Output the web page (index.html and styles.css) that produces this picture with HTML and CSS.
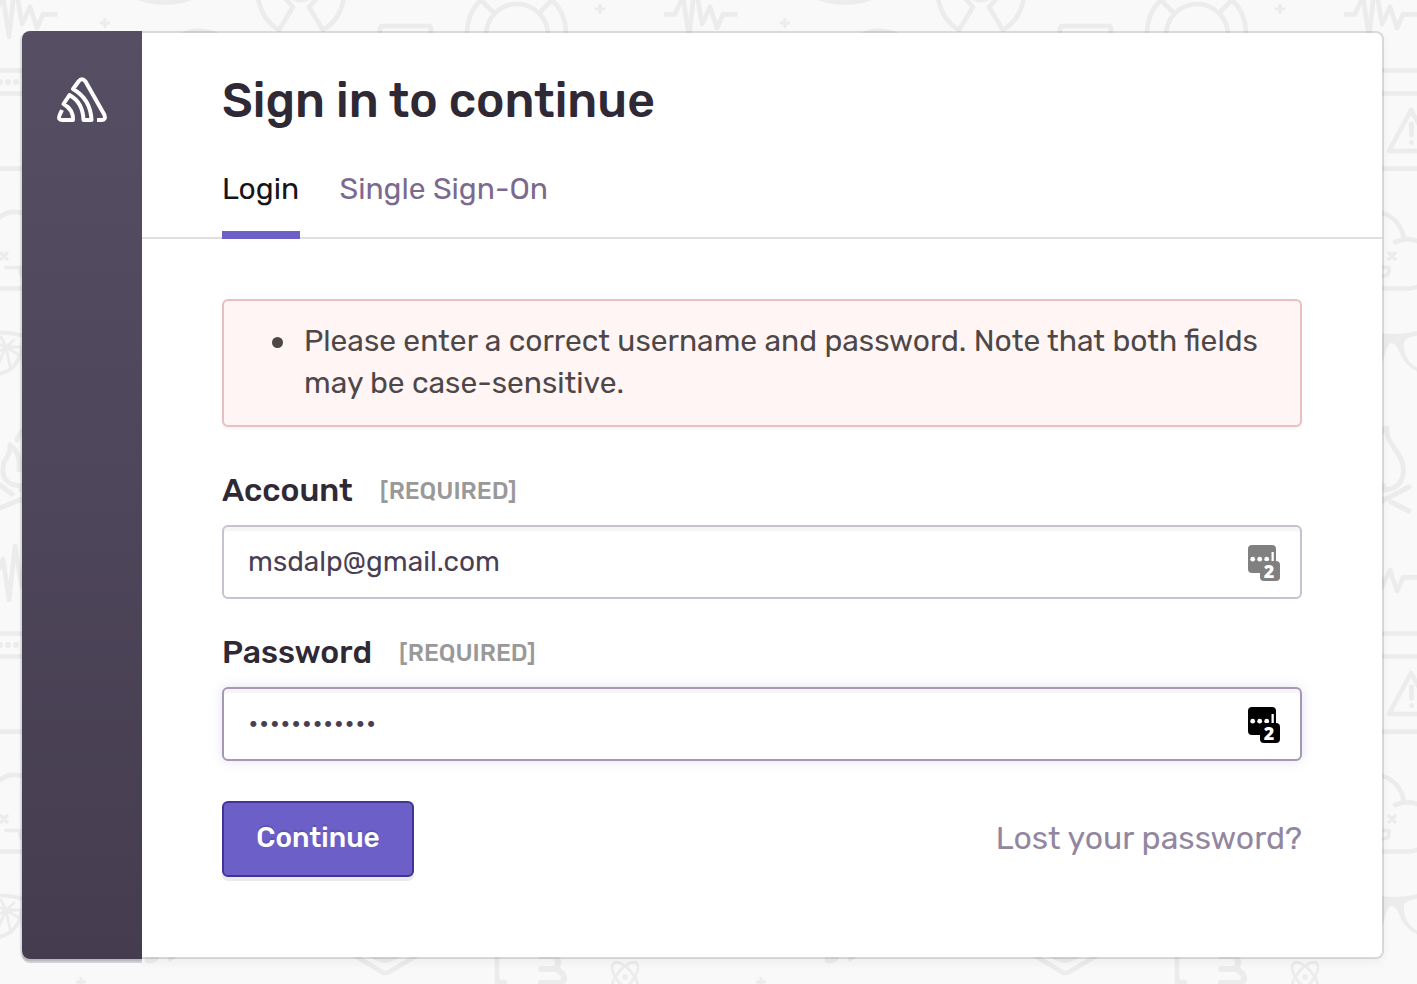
FILE: index.html
```
<!DOCTYPE html>
<html lang="en">
<head>
<meta charset="utf-8">
<title>Sign in to continue</title>
<link rel="stylesheet" href="styles.css">
</head>
<body>
<svg class="backdrop" width="1417" height="984" viewBox="0 0 1417 984" aria-hidden="true">
  <defs>
    <g id="tile">
      <!-- heartbeat -->
      <path stroke-linecap="butt" d="M664 14.3H675L683-4L689 37L695-17L702 24L710 7L717 28L723 14.3H737.5"/>
      <path stroke-width="3" stroke-linecap="butt" d="M100 23H110M105 18V28M595 9H605M600 4V14M76 419H86M81 414V424"/>
      <!-- dish, dome, radiation sign, box -->
      <ellipse cx="165" cy="-11" rx="34" ry="13.500"/>
      <path class="solid" d="M180 33Q199 24 219 33Z"/>
      <path d="M258-2Q262 20 279 30L293 7L284-3M344-2Q340 20 323 30L309 7L318-3M292-3Q301 3 309-3"/>
      <path d="M380 44V29Q380 26 383 26H428Q431 26 431 29V44"/>
      <!-- lifebuoy -->
      <circle cx="517" cy="35" r="31"/>
      <path d="M467 35Q467 13 481 0L493 12M566 35Q566 13 552 0L540 12M481 0Q516-30 552 0"/>
      <!-- browser window -->
      <path d="M700 70.500H900M700 93.500H900M700 168.600H900M680 70.500H704M680 93.500H704M680 168.600H704"/>
      <g class="solid"><circle cx="680" cy="82" r="3"/><circle cx="688" cy="82" r="3"/><circle cx="696" cy="82" r="3"/></g>
      <path d="M731 110L709 151H754Z"/>
      <path stroke-width="5" d="M731.500 124V135M731.500 142.500V142.600"/>
      <!-- cloud -->
      <path d="M675 222Q684 211 696 212C712 213 722 225 724 239M715 242Q733 234 747 248C758 263 749 288 729 288.500H665"/>
      <path stroke-width="3.500" d="M681 253L687 259M687 253L681 259M709 253L715 259M715 253L709 259M686 267.500H709V271Q709 276 702 276Q700 276 700 268"/>
      <!-- citrus and glasses -->
      <path stroke-width="4" d="M672 333Q688 331 704 336M702 348Q698 370 679 374"/>
      <path stroke-width="2.800" d="M686 347L671 341M686 347L681 337M686 347L694 340M686 347H701M686 347L699 355M686 347L690 366M686 347L679 363M686 347L673 355"/>
      <path class="solid" d="M702 333Q722 336 740 330V335Q724 337 724 343Q723 362 740 369V373Q724 366 719 351Q716 343 711 343Q708 343 705 354L701 366Z"/>
      <!-- campfire -->
      <path stroke-width="5" d="M697 440Q699 434 704 429M690 445Q701 452 699 470M690 445Q691 453 684 462Q678 486 704 486M680 485L692 494M680 508L702 499M707 428C704 444 727 454 723 475Q720 490 701 490M702 501L729 487M711 502L729 511"/>
      <!-- shield, clipboard, hand, atom -->
      <ellipse class="solid" cx="152" cy="395" rx="8" ry="5" transform="rotate(-25 152 395)"/>
      <path d="M170 396L176 392M344 386L382 409Q385 411 389 409L428 386M367 388Q385 406 403 388M497 389V430M497 419H505"/>
      <path stroke-width="6" d="M541 393H554Q562 399 555 406H541M556 406Q568 412 562 420H541"/>
      <g stroke-width="2.800"><ellipse cx="625" cy="414" rx="8" ry="18" transform="rotate(-40 625 414)"/><ellipse cx="625" cy="414" rx="8" ry="18" transform="rotate(40 625 414)"/></g>
      <circle class="solid" cx="625" cy="414" r="2.700"/>
    </g>
  </defs>
  <use href="#tile" x="-680"/><use href="#tile"/><use href="#tile" x="680"/>
  <use href="#tile" x="-680" y="563"/><use href="#tile" y="563"/><use href="#tile" x="680" y="563"/>
</svg>
<main class="card">
  <aside class="sidebar">
    <svg class="logo" width="52" height="46" viewBox="0 0 52 46" aria-hidden="true">
      <path d="M6 33L3.700 38Q1.500 43 6 43H17Q17.500 32.500 7.500 27L13.500 18Q27 25.500 27.500 43H35.500Q34.500 22 17 12L22.500 4.500Q26 0 29.500 4.500L48.500 38Q50 43 45.500 43H41"/>
    </svg>
  </aside>
  <section class="panel">
    <header class="head">
      <h1>Sign in to continue</h1>
      <nav class="tabs"><a class="tab active">Login</a><a class="tab sso">Single Sign-On</a></nav>
    </header>
    <form class="form">
      <ul class="alert"><li>Please enter a correct username and password. Note that both fields may be case-sensitive.</li></ul>
      <div class="field">
        <label for="account"><span class="name">Account</span><span class="required">[REQUIRED]</span></label>
        <div class="control"><input id="account" type="text" value="msdalp@gmail.com">
          <svg class="manager muted" width="32" height="36" viewBox="0 0 32 36"><rect width="28" height="28" rx="4"/><g class="ink"><circle cx="4.700" cy="14.200" r="2.400"/><circle cx="11.700" cy="14.200" r="2.400"/><circle cx="18.700" cy="14.200" r="2.400"/><rect x="23.500" y="7" width="2.300" height="10"/></g><rect x="12" y="16" width="20" height="20" rx="4"/><text x="21" y="33">2</text></svg>
        </div>
      </div>
      <div class="field">
        <label for="password"><span class="name">Password</span><span class="required">[REQUIRED]</span></label>
        <div class="control focused"><input id="password" type="password" value="abcdefghijkl">
          <svg class="manager" width="32" height="36" viewBox="0 0 32 36"><rect width="28" height="28" rx="4"/><g class="ink"><circle cx="4.700" cy="14.200" r="2.400"/><circle cx="11.700" cy="14.200" r="2.400"/><circle cx="18.700" cy="14.200" r="2.400"/><rect x="23.500" y="7" width="2.300" height="10"/></g><rect x="12" y="16" width="20" height="20" rx="4"/><text x="21" y="33">2</text></svg>
        </div>
      </div>
      <div class="actions"><button type="button">Continue</button><a class="lost">Lost your password?</a></div>
    </form>
  </section>
</main>
</body>
</html>
```
FILE: styles.css
```
* { box-sizing: border-box; }
body { margin: 0; height: 984px; padding: 31px 33px 25px 22px; overflow: hidden; background: #f9f9f9; font-family: Rubik, Roboto, sans-serif; color: #2f2936; }
.backdrop { position: absolute; left: 0; top: 0; z-index: -1; fill: none; stroke: #ececec; stroke-width: 4.7; stroke-linecap: round; stroke-linejoin: round; }
.backdrop .solid { fill: #ececec; stroke: none; }
.card { display: flex; width: 1362px; height: 928px; }
.sidebar { width: 120px; padding: 46px 0 0 34px; border-radius: 8px 0 0 8px; background: linear-gradient(#564f64, #453c4f); box-shadow: 0 4px 0 rgba(47, 30, 60, .16), -1px 2px 3px rgba(0, 0, 0, .12), -1px 1px 0 1px rgba(0, 0, 0, .05); clip-path: inset(0 0 -10px -6px); }
.logo { display: block; fill: none; stroke: #fff; stroke-width: 4; stroke-linejoin: round; }
.panel { width: 1242px; border: 2px solid rgba(0, 0, 0, .12); border-left: 0; border-radius: 0 8px 8px 0; background: #fff; background-clip: padding-box; box-shadow: 0 4px 8px rgba(0, 0, 0, .045); }
.head { height: 206px; padding: 36px 80px 0; border-bottom: 2px solid #e0dee3; }
h1 { margin: 0; font-size: 48px; line-height: 64px; font-weight: 500; }
.tabs { display: flex; gap: 39.5px; margin-top: 34px; }
.tab { height: 72px; font-size: 30px; line-height: 44px; color: #7c6a8e; white-space: nowrap; }
.tab.active { width: 78px; color: #161319; border-bottom: 8px solid #6c5fc7; }
.form { padding: 60px 80px 0; }
.alert { margin: 0; height: 128px; padding: 19px 30px 0 46px; border: 2px solid #e7c0bf; border-radius: 6px; background: #fff5f5; box-shadow: 0 2px 3px rgba(0, 0, 0, .05); color: #4d4748; font-size: 30px; line-height: 42px; list-style: none; }
.alert li { display: flex; gap: 21px; }
.alert li::before { content: ""; flex: none; width: 11px; height: 11px; margin: 17px 0 0 2px; border-radius: 50%; background: #4d4748; }
.field { margin-top: 42px; }
.field + .field { margin-top: 32px; }
label { display: flex; align-items: flex-start; gap: 27px; height: 56px; line-height: 42px; }
.name { font-size: 32px; font-weight: 500; }
.required { font-size: 24px; font-weight: 500; line-height: 44px; color: #999; }
.control { display: flex; align-items: center; height: 74px; padding: 0 20px 0 24px; border: 2px solid #c9c0d1; border-radius: 6px; background: #fff; box-shadow: inset 0 4px 0 rgba(0, 0, 0, .04); }
.control.focused { border-color: #a598b2; box-shadow: inset 0 4px 0 rgba(0, 0, 0, .04), 0 0 12px rgba(108, 95, 199, .18); }
input { flex: 1; min-width: 0; padding: 0; border: 0; outline: 0; background: none; color: #493e54; font: 28px/40px Rubik, Roboto, sans-serif; }
.manager { margin-top: 2px; fill: #000; overflow: visible; }
.manager.muted { fill: #808080; }
.manager .ink, .manager text { fill: #fff; }
.manager text { font: 800 18px/1 "Open Sans", sans-serif; text-anchor: middle; }
.actions { display: flex; align-items: center; justify-content: space-between; margin-top: 40px; }
button { width: 192px; height: 76px; padding: 0 0 4px; border: 2px solid #413496; border-radius: 6px; background: #6c5fc7; box-shadow: 0 4px 0 rgba(0, 0, 0, .08); color: #fff; font: 500 28px Rubik, Roboto, sans-serif; text-shadow: 0 -2px 0 rgba(0, 0, 0, .15); }
.lost { padding-bottom: 2px; font-size: 32px; color: #9386a0; }
```
